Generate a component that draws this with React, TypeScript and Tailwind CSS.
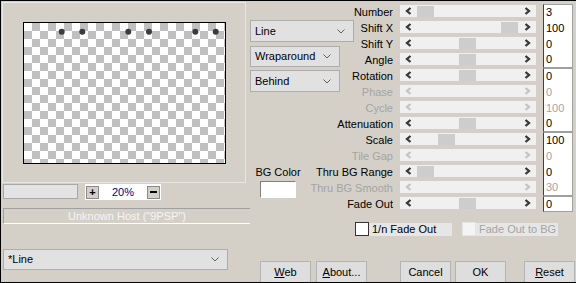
import { ReactNode } from "react"

type Row = { label: string; value: string; pos?: number; off?: boolean }

const rows: Row[] = [
  { label: "Number",         value: "3",   pos: 0 },
  { label: "Shift X",        value: "100", pos: 1 },
  { label: "Shift Y",        value: "0",   pos: 0.5 },
  { label: "Angle",          value: "0",   pos: 0.5 },
  { label: "Rotation",       value: "0",   pos: 0.5 },
  { label: "Phase",          value: "0",   off: true },
  { label: "Cycle",          value: "100", off: true },
  { label: "Attenuation",    value: "0",   pos: 0.5 },
  { label: "Scale",          value: "100", pos: 0.25 },
  { label: "Tile Gap",       value: "0",   off: true },
  { label: "Thru BG Range",  value: "0",   pos: 0 },
  { label: "Thru BG Smooth", value: "30",  off: true },
  { label: "Fade Out",       value: "0",   pos: 0.5 },
]

const dots = [37.7, 58.3, 104.3, 125, 171.3, 191.7]

function Chevron({ dir, off }: { dir: "l" | "r"; off?: boolean }) {
  return (
    <svg width="7" height="8" viewBox="0 0 7 8">
      <polyline points={dir === "l" ? "5.5,1 2,4 5.5,7" : "1.5,1 5,4 1.5,7"}
        fill="none" stroke={off ? "#c4c4c4" : "#383838"} strokeWidth="2.3" />
    </svg>
  )
}

function Combo({ w, h, children }: { w: string; h: string; children: ReactNode }) {
  return (
    <div className={`${w} ${h} flex items-center justify-between bg-[#e1e1e1] border border-[#adadad] pl-[4px] pr-[8px] text-[11px] text-black`}>
      <span>{children}</span>
      <svg width="8" height="5" viewBox="0 0 8 5">
        <polyline points="0.5,0.5 4,4 7.5,0.5" fill="none" stroke="#606060" strokeWidth="1" />
      </svg>
    </div>
  )
}

function Btn({ children, className }: { children: ReactNode; className?: string }) {
  return (
    <div className={`w-[51px] h-[22px] shrink-0 flex items-center justify-center bg-[#dedede] border border-[#b4b4b4] text-[11px] text-black ${className ?? ""}`}>
      {children}
    </div>
  )
}

export default function App() {
  return (
    <div className="w-[576px] h-[283px] bg-[#d4d0c8] border-t border-l border-b border-black overflow-hidden flex text-[11px] text-black" style={{ fontFamily: '"Liberation Sans", Arial, sans-serif' }}>
      {/* left: preview */}
      <div className="w-[249px] shrink-0 pl-[1px] pt-[1px] flex flex-col">
        <div className="w-[244px] h-[181px] border border-[#e9e7e2] pl-[20px] pt-[19px]">
          <div className="w-[203px] h-[142px] border border-black bg-[conic-gradient(#c0c0c0_25%,#ffffff_0_50%,#c0c0c0_0_75%,#ffffff_0)] bg-[length:16px_16px]">
            <svg width="201" height="140" viewBox="0 0 201 140">
              {dots.map(x => <circle key={x} cx={x} cy={8.7} r={3} fill="#3c3c3c" />)}
            </svg>
          </div>
        </div>

        <div className="flex mt-[1px] ml-[1px]">
          <div className="w-[75px] h-[15px] bg-[#e3e3e3] border border-[#a8a8a8]" />
          <div className="ml-[7px] w-[76px] h-[16px] bg-white p-[1px] flex items-center justify-between">
            <div className="w-[13px] h-[13px] bg-[#d4d0c8] border border-[#8a8a8a] flex items-center justify-center text-[11px] font-bold leading-none">+</div>
            <span className="text-[11px] text-[#000080] leading-none">20%</span>
            <div className="w-[13px] h-[13px] bg-[#d4d0c8] border border-[#8a8a8a] flex items-center justify-center">
              <div className="w-[7px] h-[2px] bg-black" />
            </div>
          </div>
        </div>

        <div className="mt-[8px] ml-[1px] w-[247px] h-[16px] border-t border-l border-[#a0a0a0] border-b border-b-white flex items-center justify-center text-[11px] text-[#f4f4f4] leading-none">
          Unknown Host ("9PSP")
        </div>

        <div className="mt-[25px] ml-[1px]">
          <Combo w="w-[225px]" h="h-[21px]">*Line</Combo>
        </div>
      </div>

      {/* right */}
      <div className="flex-1 flex flex-col">
        <div className="flex">
          {/* middle column */}
          <div className="w-[105px] shrink-0 flex flex-col">
            <div className="mt-[19px]"><Combo w="w-[104px]" h="h-[22px]">Line</Combo></div>
            <div className="mt-[4px]"><Combo w="w-[90px]" h="h-[21px]">Wraparound</Combo></div>
            <div className="mt-[3px]"><Combo w="w-[90px]" h="h-[22px]">Behind</Combo></div>
            <div className="mt-[74px] ml-[7px] w-[42px] flex flex-col items-center">
              <span className="text-[11px] leading-[13px] whitespace-nowrap">BG Color</span>
              <div className="mt-[2px] w-[36px] h-[17px] bg-white border-t border-l border-[#808080] border-b border-r border-b-white border-r-white" />
            </div>
          </div>

          {/* sliders */}
          <div className="pt-[3px] flex flex-col">
            {rows.map((r, i) => (
              <div key={r.label} className="h-[16px] flex">
                <div className="w-[38px] h-[16px] flex items-center justify-end">
                  <span className={`whitespace-nowrap text-[11px] leading-none ${r.off ? "text-[#a4a4a4]" : "text-black"}`}>{r.label}</span>
                </div>
                <div className="ml-[7px] mt-[1px] w-[136px] h-[12px] bg-[#f0f0f0] flex items-center">
                  <div className="w-[17px] flex justify-center"><Chevron dir="l" off={r.off} /></div>
                  <div className="flex-1 h-[12px] flex items-center">
                    {!r.off && (
                      <div className="w-[17px] h-[11px] bg-[#cdcdcd]" style={{ marginLeft: `${Math.round((r.pos ?? 0) * 84)}px` }} />
                    )}
                  </div>
                  <div className="w-[17px] flex justify-center"><Chevron dir="r" off={r.off} /></div>
                </div>
                <div className={`ml-[7px] w-[30px] h-[16px] bg-white border-l border-l-[#404040] border-r border-r-[#a0a0a0] pl-[2px] flex items-center text-[11px] leading-none
                  ${i % 4 === 0 ? "border-t border-t-[#a0a0a0]" : ""} ${i % 4 === 3 || i === 12 ? "border-b border-b-[#a0a0a0]" : ""}
                  ${r.off ? "text-[#a4a4a4]" : "text-black"}`}>
                  {r.value}
                </div>
              </div>
            ))}
          </div>
        </div>

        {/* checkboxes */}
        <div className="mt-[10px] ml-[105px] flex items-center">
          <div className="w-[14px] h-[14px] bg-white border border-[#333333]" />
          <div className="w-[83px] h-[13px] bg-[#e6e6e6] pl-[3px] flex items-center text-[11px] leading-none">1/n Fade Out</div>
          <div className="ml-[10px] w-[14px] h-[14px] bg-[#f4f4f4] border border-[#e4e4e4]" />
          <div className="w-[82px] h-[13px] bg-[#e6e6e6] pl-[3px] flex items-center text-[11px] leading-none text-[#a4a4a4] whitespace-nowrap">Fade Out to BG</div>
        </div>

        {/* buttons */}
        <div className="mt-[25px] flex">
          <Btn className="ml-[10px] w-[50px]"><span><u>W</u>eb</span></Btn>
          <Btn className="ml-[5px]"><span><u>A</u>bout...</span></Btn>
          <Btn className="ml-[33px]">Cancel</Btn>
          <Btn className="ml-[4px]">OK</Btn>
          <Btn className="ml-[18px]"><span><u>R</u>eset</span></Btn>
        </div>
      </div>
    </div>
  )
}
